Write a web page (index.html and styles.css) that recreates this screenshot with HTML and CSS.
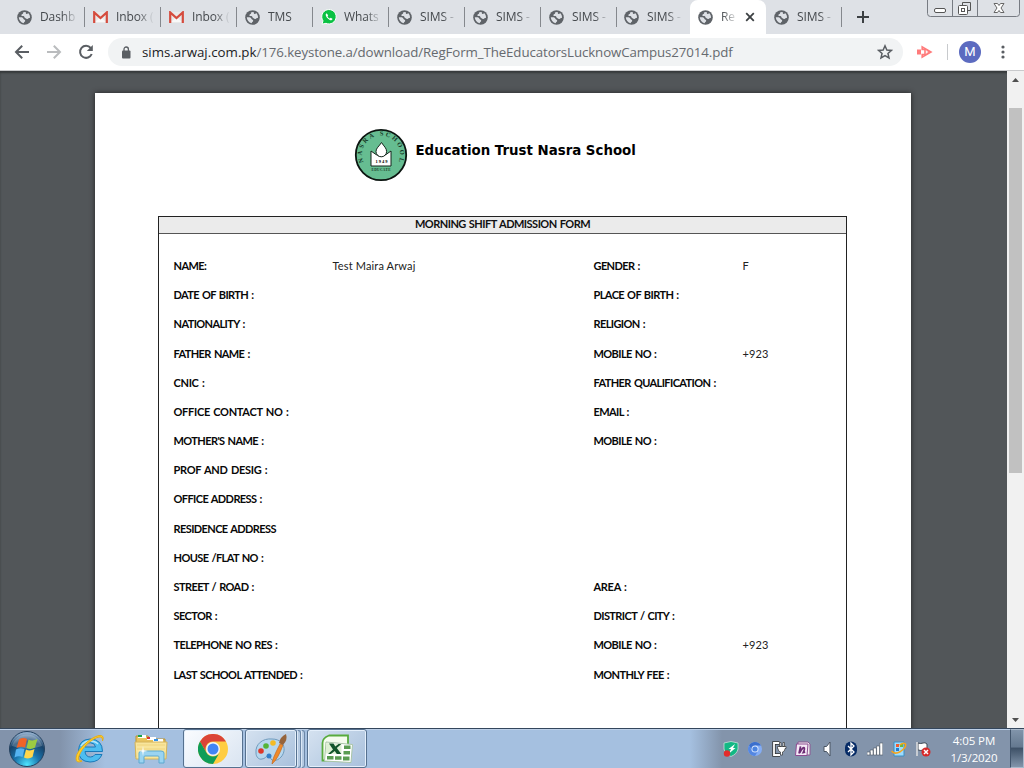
FILE: index.html
```html
<!DOCTYPE html>
<html lang="en">
<head>
<meta charset="utf-8">
<title>RegForm_TheEducatorsLucknowCampus27014.pdf</title>
<link rel="stylesheet" href="styles.css">
</head>
<body>
<svg class="defs" aria-hidden="true">
  <symbol id="globe" viewBox="0 0 16 16">
    <circle cx="8" cy="8" r="7.8" fill="#5f6368"/>
    <path d="M9.500 2.200C8 1.900 7 2.300 6.100 3c.7.300.5 1-.3 1.300-.9.300-1.300 1-1 1.700.4.900 1.600.2 2.500.6.700.4.300 1.200 1.200 1.700 1 .6 1.300 1.500 2.600 1.200 1-.3 1.200-1.200 2.800-1.300.1-2-.7-3.700-2.100-4.900-.3.900-1.300 1.300-2 .7-.5-.4-.8-1.100-.3-1.800z" fill="#dee1e6"/>
    <path d="M1.900 7.800c1.600 0 3.200-.2 4.200.5.900.6.500 1.400 1.400 1.800 1 .4 1.500 1 1.100 1.900-.4.800-1.200.9-1.500 2C4.200 13.500 2 11 1.900 7.800z" fill="#dee1e6"/>
  </symbol>
  <symbol id="gmail" viewBox="0 0 15 12">
    <path d="M1 1h13v11H1z" fill="#e9e9e9"/><path d="M2 11l5.500-5 5.500 5z" fill="#f8f8f8"/>
    <path d="M1.200 12V1.400L7.500 7l6.300-5.600V12" fill="none" stroke="#d54b3d" stroke-width="2.200"/>
  </symbol>
</svg>
<div class="screen">
  <header class="tabstrip">
    <div class="tab"><svg class="fav"><use href="#globe"/></svg><span class="label">Dashb</span></div>
    <div class="tab"><svg class="fav mail"><use href="#gmail"/></svg><span class="label">Inbox (</span></div>
    <div class="tab"><svg class="fav mail"><use href="#gmail"/></svg><span class="label">Inbox (</span></div>
    <div class="tab"><svg class="fav"><use href="#globe"/></svg><span class="label">TMS</span></div>
    <div class="tab"><svg class="fav wa" viewBox="0 0 16 16"><path d="M1 15.200 2 11.800A7.200 7.200 0 1 1 5 14.300z" fill="#0ac143" stroke="#fff"/><path d="M5.500 4.200 4.700 5.400c0 2.500 3.200 5.800 5.700 5.800l1.300-1.200-1.900-1.300-1 .9C7.800 9.100 6.900 8.200 6.500 7.200l.7-1z" fill="#fff"/></svg><span class="label">Whats</span></div>
    <div class="tab"><svg class="fav"><use href="#globe"/></svg><span class="label">SIMS -</span></div>
    <div class="tab"><svg class="fav"><use href="#globe"/></svg><span class="label">SIMS -</span></div>
    <div class="tab"><svg class="fav"><use href="#globe"/></svg><span class="label">SIMS -</span></div>
    <div class="tab last"><svg class="fav"><use href="#globe"/></svg><span class="label">SIMS -</span></div>
    <div class="tab active"><svg class="fav"><use href="#globe"/></svg><span class="label">Re</span><svg class="close" viewBox="0 0 10 10"><path d="M1.200 1.200l7.600 7.600M8.800 1.200 1.200 8.800" stroke="#3c4043" stroke-width="1.800"/></svg></div>
    <div class="tab"><svg class="fav"><use href="#globe"/></svg><span class="label">SIMS -</span></div>
    <svg class="plus" viewBox="0 0 12 12"><path d="M6 0v12M0 6h12" stroke="#3c4043" stroke-width="2"/></svg>
    <svg class="winctl" viewBox="0 0 94 18" fill="none" stroke="#777b82">
      <path d="M.5 0v13.500q0 3 3 3h86q3 0 3-3V0M25.500 0v16M50.500 0v16"/>
      <rect x="7.500" y="8.500" width="11" height="4" rx="1.500" fill="#fff" stroke="#555"/>
      <path d="M35.500 5V2.500h8v8H41" stroke="#555"/><rect x="31.500" y="5.500" width="9" height="9" rx="1" fill="#fff" stroke="#555"/><rect x="34.500" y="8.500" width="3" height="3" stroke="#555"/>
      <path d="M67 3.500h3.500l1.500 2 1.500-2H77L74 8l3 4.500h-3.500l-1.500-2-1.500 2H67L70 8z" fill="#fff" stroke="#666"/>
    </svg>
  </header>
  <nav class="toolbar">
    <svg class="nav" viewBox="0 0 16 16"><path d="M15 8H2M8.200 1.800 2 8l6.200 6.200" fill="none" stroke="#5a5e63" stroke-width="2"/></svg>
    <svg class="nav" viewBox="0 0 16 16"><path d="M1 8h13M7.800 1.800 14 8l-6.200 6.200" fill="none" stroke="#babcbe" stroke-width="2"/></svg>
    <svg class="nav" viewBox="0 0 16 16"><path d="M12.700 4A6 6 0 1 0 13.700 10" fill="none" stroke="#5a5e63" stroke-width="2"/><path d="M14.800 1v6H8.800z" fill="#5a5e63"/></svg>
    <div class="omnibox">
      <svg class="lock" viewBox="0 0 10 13"><rect x="1" y="4.500" width="8.500" height="8" rx="1" fill="#5a5e63"/><path d="M3 5V3.200a2.200 2.200 0 0 1 4.400 0V5" fill="none" stroke="#5a5e63" stroke-width="1.300"/></svg>
      <span class="url">sims.arwaj.com.pk<span class="path">/176.keystone.a/download/RegForm_TheEducatorsLucknowCampus27014.pdf</span></span>
      <svg class="star" viewBox="0 0 16 16"><path d="M8 1.800l1.850 4.200 4.550.400-3.450 3 1.050 4.500L8 11.500l-4 2.400 1.050-4.500-3.450-3L6.150 6z" fill="none" stroke="#5a5e63" stroke-width="1.500"/></svg>
    </div>
    <svg class="ext" viewBox="0 0 17 14"><path d="M1 4.500h4v5H1z" fill="#ff7b7b"/><path d="M6.200 1.800v2.700H9v5H6.200v2.700L15 7z" fill="#fff" stroke="#ff7b7b" stroke-width="1.600"/><path d="M10.500 4.500 15 7l-4.500 2.500z" fill="#ff7b7b"/><path d="M10.200 5.700 12.500 7l-2.300 1.300z" fill="#fff"/></svg>
    <i class="rule"></i>
    <span class="avatar">M</span>
    <svg class="dots" viewBox="0 0 4 14" fill="#5a5e63"><circle cx="2" cy="2" r="1.600"/><circle cx="2" cy="7" r="1.600"/><circle cx="2" cy="12" r="1.600"/></svg>
  </nav>
  <main class="viewer">
    <article class="page">
      <div class="brand">
        <svg class="seal" viewBox="0 0 54 54">
          <circle cx="27" cy="27" r="25.200" fill="#66bd91" stroke="#0c1511" stroke-width="1.800"/>
          <path id="arc" d="M9.500 34A19 19 0 1 1 44.500 34" fill="none"/>
          <text class="sealname"><textPath href="#arc" textLength="74">NASRA SCHOOL</textPath></text>
          <path d="M17 23V38h20V23l-5 3.500q-5 3.500-10 0z" fill="#fff" stroke="#14251c"/>
          <path d="M27.500 14.500C25 18.500 22 20 22 23.500a5.300 5.300 0 0 0 10.600 0C32.600 20 30 18.500 27.500 14.500z" fill="#fff" stroke="#14251c"/>
          <text class="year" x="21.500" y="34.500" textLength="12">1949</text>
          <text class="trust" x="17.500" y="42.500" textLength="19">EDUCATE</text>
        </svg>
        <h1>Education Trust Nasra School</h1>
      </div>
      <section class="form">
        <h2>MORNING SHIFT ADMISSION FORM</h2>
        <div class="fields">
          <b>NAME:</b><span>Test Maira Arwaj</span><b>GENDER :</b><span>F</span>
          <b>DATE OF BIRTH :</b><span></span><b>PLACE OF BIRTH :</b><span></span>
          <b>NATIONALITY :</b><span></span><b>RELIGION :</b><span></span>
          <b>FATHER NAME :</b><span></span><b>MOBILE NO :</b><span>+923</span>
          <b class="wide">CNIC :</b><span></span><b>FATHER QUALIFICATION :</b><span></span>
          <b class="wide">OFFICE CONTACT NO :</b><span></span><b>EMAIL :</b><span></span>
          <b>MOTHER'S NAME :</b><span></span><b>MOBILE NO :</b><span></span>
          <b class="wide">PROF AND DESIG :</b><span></span><b></b><span></span>
          <b>OFFICE ADDRESS :</b><span></span><b></b><span></span>
          <b>RESIDENCE ADDRESS</b><span></span><b></b><span></span>
          <b>HOUSE /FLAT NO :</b><span></span><b></b><span></span>
          <b>STREET / ROAD :</b><span></span><b class="wide">AREA :</b><span></span>
          <b>SECTOR :</b><span></span><b>DISTRICT / CITY :</b><span></span>
          <b>TELEPHONE NO RES :</b><span></span><b>MOBILE NO :</b><span>+923</span>
          <b>LAST SCHOOL ATTENDED :</b><span></span><b>MONTHLY FEE :</b><span></span>
        </div>
      </section>
    </article>
    <aside class="scrollbar">
      <svg viewBox="0 0 7 4"><path d="M0 4 3.500 0 7 4z" fill="#505050"/></svg>
      <i class="thumb"></i>
      <svg viewBox="0 0 7 4"><path d="M0 0h7L3.500 4z" fill="#505050"/></svg>
    </aside>
  </main>
  <footer class="taskbar">
    <svg class="start" viewBox="0 0 38 38">
      <defs><radialGradient id="orb" cx=".5" cy=".95" r=".9"><stop offset="0" stop-color="#4ee5ff"/><stop offset=".4" stop-color="#1a75ad"/><stop offset=".75" stop-color="#174269"/><stop offset="1" stop-color="#8facca"/></radialGradient></defs>
      <circle cx="19" cy="19" r="17.500" fill="url(#orb)" stroke="#24415f"/>
      <path d="M4 16A15.500 15.500 0 0 1 34 16Q19 21 4 16z" fill="#fff" opacity=".22"/>
      <path d="M11 9.500q4-2.500 8-.500l-2 8.500q-4-1.500-8.500.500z" fill="#ef6428"/><path d="M20.500 9.500q4 2 9-.500l-2.500 8.500q-4 2.500-8.500.500z" fill="#9bcb42"/><path d="M8 19.500q4-2 8.500-.500l-2 8q-4-1.500-8 .500z" fill="#55b3f0"/><path d="M18 19.500q4 2 8.500-.500l-2 8q-4 2.500-8.500.500z" fill="#ffd64a"/>
    </svg>
    <svg class="ie" viewBox="0 0 32 32">
      <path d="M28.500 18.500H11q.5 5.500 5.500 5.500 3 0 4.500-2.500h7Q25 29 16 29 4.500 28.500 4.500 17.500 5 6.500 16 6q12.500.5 12.500 12.500zM11 14h10.500q-.5-4-5-4.200T11 14z" fill="#4dbdf0" stroke="#1979b9"/>
      <path d="M7 13Q10 8 16 8q5 0 8 3" fill="none" stroke="#b5e6fb" stroke-width="1.300"/>
      <path d="M28.500 8Q31 2 25 2.500C17 4 3 16 2 25q0 6 6 3-5 0-3-5C8 14 19 5 25 4q4-.500 3.500 4z" fill="#ffd12c" stroke="#e4ac1c" stroke-width="1"/>
    </svg>
    <svg class="folder" viewBox="0 0 34 32">
      <path d="M2 3h12l2 3h15v18H2z" fill="#e9c45e" stroke="#b99438"/><path d="M4 2h8v3H4z" fill="#fff"/><path d="M4 2h4v2H4z" fill="#19a34a"/><path d="M13 4h9v3h-9z" fill="#fff"/><path d="M13 4h3v2h-3z" fill="#d33"/><path d="M19 6h10v3H19z" fill="#fff"/><path d="M20 6h4v2h-4z" fill="#3393e8"/>
      <path d="M1 9h32l-1 17H2z" fill="#f8e59c" stroke="#d4b45a"/><path d="M3 12h28M3 16h28" stroke="#efd47d"/>
      <path d="M5 30V20q0-2 3-2h19q3 0 3 2v10h-5v-6q0-1-1-1H11q-1 0-1 1v6z" fill="#9ad4f1" stroke="#5da9d0"/><path d="M9 13l.700 4.300 4.300.700-4.300.700L9 23l-.7-4.300L4 18l4.300-.7z" fill="#fff"/>
    </svg>
    <div class="task chrome"><svg viewBox="0 0 30 30">
      <circle cx="15" cy="15" r="15" fill="#ffcd42"/><path d="M2 7.500A15 15 0 0 1 28 7.500H15A7.500 7.500 0 0 0 8.500 18.750z" fill="#db4437"/><path d="M2 7.500A15 15 0 0 0 15 30l6.500-11.250a7.500 7.500 0 0 1-13 0z" fill="#0f9d58"/><circle cx="15" cy="15" r="7" fill="#f5f5f5"/><circle cx="15" cy="15" r="5.500" fill="#4285f4"/>
    </svg></div>
    <div class="task paint"><svg viewBox="0 0 34 32">
      <path d="M2 20C1 11 9 5 18 6c8 0 13 5 12 12-1 6-7 11-12 9-2-1-1-4-4-4-2 0-3 3-6 3-3 1-6-2-6-6z" fill="#b6d7ee" stroke="#709bbd"/><circle cx="7" cy="18" r="2.800" fill="#dd3829"/><circle cx="12" cy="13" r="2.800" fill="#53b537"/><circle cx="19" cy="10" r="2.800" fill="#f4bb24"/><circle cx="15" cy="23" r="2.500" fill="#3280cb"/>
      <path d="M18 31q0-5 8-20l3 1q-5 14-11 19z" fill="#ef8a29" stroke="#bd6219" stroke-width=".6"/><path d="M25 10q1-6 7-9 2 6-3 11z" fill="#96643c"/>
    </svg></div>
    <i class="stack"></i><i class="stack"></i>
    <div class="task excel"><svg viewBox="0 0 32 30">
      <path d="M8 1.500h19v25H1.500V9q0-5 6.500-7.500z" fill="#f5fcee" stroke="#58ab3d" stroke-width="1.800"/><path d="M5 8l26.500 2.500-1.500 18L3.500 27z" fill="#fff" stroke="#a9c5a7"/><path d="M23 11.500h6.500V15H23zM22.500 17H29v3.500h-6.500zM6 22h6.500v3.500H6zM14 22.300h6.500v3.500H14zM22 22.500h6.500v4H22z" fill="#5b9c53"/><path d="M5 9l15.500 1.500V20L5 19.500z" fill="#dff0d4"/><path d="M8 9.500h4.500l1.800 3 3.200-2.500h2.800l-4.500 4 4.500 6h-4.500l-2-3-4 3H7l5-4.500z" fill="#12552b"/>
    </svg></div>
    <div class="tray">
      <svg viewBox="0 0 16 16"><path d="M8 .5l7 1.500v6q-1 5-7 7.500Q2 13 1 8V2z" fill="#12b884" stroke="#c5dfd8" stroke-width=".8"/><path d="M12 3 5.500 8H8l-2 4.500L12.500 7H10z" fill="#fff"/><circle cx="4" cy="12.500" r="3.200" fill="#e42b2b"/></svg>
      <svg viewBox="0 0 16 16"><circle cx="8" cy="8" r="7" fill="#84adf5"/><path d="M2 4.500A7 7 0 0 1 14 4.500H8L5 9z" fill="#3b6fcc"/><path d="M2 4.500A7 7 0 0 0 8 15l3-5H5z" fill="#5487e2"/><circle cx="8" cy="8" r="3.500" fill="#dceaff"/><circle cx="8" cy="8" r="2.600" fill="#4c84df"/></svg>
      <svg viewBox="0 0 16 16"><path d="M8.500 2H3v12h6" fill="none" stroke="#333" stroke-width="3.400"/><path d="M8.500 2H3v12h6" fill="none" stroke="#fff" stroke-width="1.800"/><path d="M6.500 5.500H15v2h-1q0 3-2.500 3.500v3h-2v-3Q7 10.500 7 7.500h-.5zM8.500 1.500H10v4H8.500zM12 1.500h1.500v4H12z" fill="#fff" stroke="#333" stroke-width=".7"/></svg>
      <svg viewBox="0 0 16 16"><path d="M3 1h10l2 2v11H3z" fill="#eee" stroke="#8d5793"/><path d="M1.500 3H13l-1 11.500H.5z" fill="#f5e9f6" stroke="#8d4c92"/><path d="M4 12.500 5.500 5.500l-.8 6.300q3-5.800 4.500-5 .8 1-1 4.800l2-.5" fill="none" stroke="#6c2c74" stroke-width="1.700"/></svg>
      <svg viewBox="0 0 16 16"><path d="M5 5.500h2.500L11 1v14l-3.500-4.500H5z" fill="#fff" stroke="#4a5462"/></svg>
      <svg viewBox="0 0 16 16"><rect x="2" y=".5" width="12" height="15" rx="6" fill="#062b66"/><path d="M5 5l6 6-3 3V2l3 3-6 6" fill="none" stroke="#fff" stroke-width="1.300"/></svg>
      <svg viewBox="0 0 16 16" fill="#fff" stroke="#4a5462" stroke-width=".6"><path d="M0 11h3v3H0zM3.200 9h3v5h-3zM6.400 7h3v7h-3zM9.600 5h3v9h-3zM12.800 2h3v12h-3z"/></svg>
      <svg viewBox="0 0 16 16"><path d="M3 1h10v14H3z" fill="#9edcff" stroke="#3a8ec3"/><path d="M5 3h3v3H5z" fill="#ef5b31"/><path d="M9 3h3v3H9z" fill="#69b93c"/><path d="M5 7h3v3H5z" fill="#247dcc"/><path d="M.5 10q3 4 9 .5 6-4 5-7.500-2-2-6 1" fill="none" stroke="#f6a51e" stroke-width="1.500"/></svg>
      <svg viewBox="0 0 16 16"><path d="M2 1v14M3 2q3 1 5 0 2-1 4 1v6q-2-1-4 0T3 9z" fill="#fff" stroke="#3e4855"/><path d="M2 1v14" stroke="#fff" stroke-width="1.300"/><circle cx="11" cy="11" r="4.500" fill="#d72929"/><path d="M9 9l4 4m0-4-4 4" stroke="#fff" stroke-width="1.500"/></svg>
    </div>
    <div class="clock"><span>4:05 PM</span><span>1/3/2020</span></div>
    <i class="peek"></i>
  </footer>
</div>
</body>
</html>
```
FILE: styles.css
```css
* { box-sizing: border-box; }
body { margin: 0; font-family: "Open Sans", "Noto Sans", sans-serif; overflow: hidden; }
.defs { position: absolute; width: 0; height: 0; }
.screen { width: 1024px; height: 768px; display: flex; flex-direction: column; }
svg { display: block; flex: none; }

.tabstrip { height: 34px; flex: none; background: #dee1e6; display: flex; padding-left: 9px; position: relative; }
.tab { width: 76px; height: 34px; flex: none; display: flex; align-items: center; padding: 0 7px 0 8px; position: relative; }
.tab::after { content: ""; position: absolute; right: 0; top: 7px; width: 1px; height: 20px; background: #85888d; }
.tab.last { width: 73px; padding-left: 7px; }
.tab.last::after, .tab.active::after { display: none; }
.fav { width: 15px; height: 15px; margin-right: 8px; }
.mail { height: 12px; }
.wa { width: 16px; height: 16px; margin-right: 7px; }
.label { flex: 1; min-width: 0; white-space: nowrap; font-size: 12px; line-height: 18px; letter-spacing: -.1px; color: #45494d; -webkit-mask-image: linear-gradient(90deg, #000 calc(100% - 16px), transparent); mask-image: linear-gradient(90deg, #000 calc(100% - 16px), transparent); }
.active { background: #fff; border-radius: 8px 8px 0 0; }
.active .label { flex: 0 0 17px; }
.close { width: 10px; height: 10px; margin-left: 7px; }
.plus { width: 12px; height: 12px; margin: 11px 0 0 15px; }
.winctl { position: absolute; left: 927px; top: 0; width: 94px; height: 18px; }

.toolbar { height: 37px; flex: none; background: #fff; border-bottom: 1px solid #c9cacc; display: flex; align-items: center; padding-left: 14px; }
.nav { width: 16px; height: 16px; margin-right: 16px; }
.omnibox { width: 795px; height: 28px; border-radius: 14px; background: #f1f3f4; margin-left: -2px; display: flex; align-items: center; padding: 0 10px 0 13px; }
.lock { width: 10px; height: 13px; margin-right: 11px; }
.url { flex: 1; font-size: 13.300px; line-height: 20px; color: #202124; white-space: nowrap; }
.path { color: #666a6f; letter-spacing: -.105px; }
.star { width: 16px; height: 16px; }
.ext { width: 17px; height: 14px; margin-left: 13px; }
.rule { width: 1px; height: 16px; background: #c8cacd; margin-left: 14px; }
.avatar { width: 22px; height: 22px; border-radius: 50%; background: #5c6bc0; color: #fff; font: 13px/22px Roboto, sans-serif; text-align: center; margin-left: 11px; }
.dots { width: 4px; height: 14px; margin-left: 20px; }

.viewer { height: 657px; flex: none; background: #525659; display: flex; justify-content: space-between; padding-left: 95px; overflow: hidden; box-shadow: inset 0 2px 2px #36393b; }
.page { width: 816px; height: 700px; margin-top: 22px; background: #fff; box-shadow: 0 0 5px #222; padding: 36px 64px 0 63px; flex: none; }
.brand { display: flex; height: 87px; padding-left: 196px; }
.seal { width: 54px; height: 54px; margin-top: -1px; }
.sealname { font: bold 6.500px "Liberation Serif", serif; fill: #173b29; }
.year { font: bold 4.500px "Liberation Serif", serif; }
.trust { font: bold 3.500px "Liberation Serif", serif; fill: #173b29; }
.brand h1 { margin: 12px 0 0 7.500px; font: bold 13.350px/20px "DejaVu Sans", sans-serif; color: #000; white-space: nowrap; }
.form { width: 689px; height: 600px; border: 1px solid #222; border-width: 1px 1px 0; }
.form h2 { margin: 0; height: 17px; background: #ebebeb; border-bottom: 1px solid #555; font: bold 11px/14px Lato, sans-serif; letter-spacing: -.52px; word-spacing: .8px; text-align: center; color: #111; }
.fields { display: grid; grid-template-columns: 159px 261px 149px 1fr; grid-auto-rows: 29.200px; padding: 17.400px 0 0 14.500px; align-items: center; white-space: nowrap; font: 11px/16px Lato, sans-serif; letter-spacing: .15px; color: #222; }
.fields b { color: #080808; font-weight: bold; letter-spacing: -.6px; word-spacing: 1px; }
.fields .wide { letter-spacing: -.3px; }

.scrollbar { width: 17px; height: 657px; background: #f1f1f1; display: flex; flex-direction: column; align-items: center; padding: 7px 0 6px; }
.scrollbar svg { width: 7px; height: 4px; }
.thumb { width: 13px; height: 365px; background: #c1c1c1; margin: 26px 0 auto; }

.taskbar { height: 40px; flex: none; display: flex; align-items: center; border-top: 1px solid #34465c; box-shadow: inset 0 1px #bdd0e8; background: linear-gradient(90deg, #8293ab 0, #8293ab 60px, #a5c0e0 105px, #a5c0e0 690px, #8394ab 722px); }
.start { width: 38px; height: 38px; margin-left: 8px; }
.ie { width: 32px; height: 32px; margin-left: 28px; }
.folder { width: 34px; height: 32px; margin-left: 28px; }
.task { height: 39px; border: 1px solid #56718f; border-radius: 3px; box-shadow: inset 0 0 0 1px #e4effb; background: linear-gradient(135deg, #d5e2f0, #a8c0dc); display: flex; align-items: center; justify-content: center; }
.chrome { width: 60px; margin-left: 15px; background: linear-gradient(135deg, #fafcff, #d9e4f1); }
.chrome svg { width: 30px; height: 30px; }
.paint { width: 52px; margin-left: 2px; }
.paint svg { width: 34px; height: 32px; }
.stack { width: 4px; height: 38px; border: 1px solid #6c87a7; border-left: 1px solid #dbe8f6; border-radius: 0 3px 3px 0; background: #b5cae2; }
.excel { width: 60px; margin-left: 2px; }
.excel svg { width: 32px; height: 30px; }
.tray { display: flex; gap: 8px; margin-left: auto; }
.tray svg { width: 16px; height: 16px; }
.clock { width: 70px; margin-left: 8px; display: flex; flex-direction: column; align-items: center; color: #fff; font-size: 11.500px; line-height: 17px; letter-spacing: -.1px; }
.peek { width: 14px; height: 39px; margin-left: 1px; border: 1px solid #a9b9cb; border-left-color: #41546b; background: linear-gradient(#8194aa, #657990 45%, #3f5268 50%, #8295ab); }
```
